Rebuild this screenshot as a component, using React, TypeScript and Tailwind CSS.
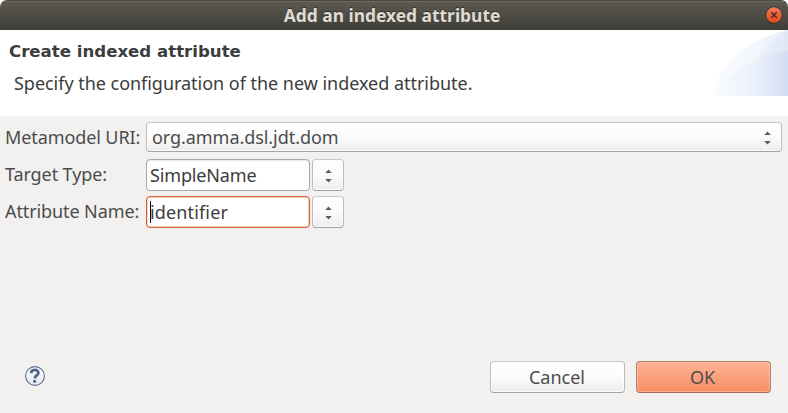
import type { ReactNode } from "react";

function Arrows() {
  return (
    <svg width="7" height="12" viewBox="0 0 7 12" className="shrink-0 overflow-visible">
      <path d="M0.2 3 L3.5 -0.6 L6.8 3 Z M0.2 9 L3.5 12.6 L6.8 9 Z" fill="#5c5c5c" />
    </svg>
  );
}

function Help() {
  return (
    <svg width="20" height="20" viewBox="0 0 20 20" aria-label="Help">
      <defs>
        <linearGradient id="help" x1="0" y1="0" x2="0" y2="1">
          <stop offset="0" stopColor="#ffffff" />
          <stop offset="1" stopColor="#e6e8ec" />
        </linearGradient>
      </defs>
      <circle cx="10" cy="10" r="9.4" fill="url(#help)" stroke="#5b7190" strokeWidth="1.1" />
      <path d="M6.1 7.3 C6.1 3 13.4 2.8 13.4 6.8 C13.4 9.4 10 9.4 9.8 12.3" fill="none" stroke="#4c6487" strokeWidth="2.7" />
      <circle cx="9.6" cy="15.3" r="1.6" fill="#4c6487" />
    </svg>
  );
}

function Banner() {
  return (
    <svg width="75" height="66" viewBox="0 0 75 66" className="shrink-0">
      <defs>
        <linearGradient id="wave" gradientUnits="userSpaceOnUse" x1="0" x2="75" y1="0" y2="0">
          <stop offset="0" stopColor="#f9fbfe" />
          <stop offset="0.5" stopColor="#f4f7fd" />
          <stop offset="1" stopColor="#e8eefa" />
        </linearGradient>
        <linearGradient id="fold" gradientUnits="userSpaceOnUse" x1="40" x2="75" y1="0" y2="0">
          <stop offset="0" stopColor="#eff3fb" />
          <stop offset="1" stopColor="#dfe7f7" />
        </linearGradient>
        <linearGradient id="front" gradientUnits="userSpaceOnUse" x1="0" x2="75" y1="0" y2="0">
          <stop offset="0" stopColor="#fafbfe" />
          <stop offset="0.45" stopColor="#eef3fc" />
          <stop offset="0.8" stopColor="#dfe7f7" />
          <stop offset="1" stopColor="#d0dcf3" />
        </linearGradient>
      </defs>
      <path d="M0 66 C3 38 37 7 75 0 V66 Z" fill="url(#wave)" />
      <path d="M42 36 C50 18 61 7 75 1 V36 Z" fill="url(#fold)" />
      <path d="M0 66 C2 60 6 56 12 51 C29 38 50 24 75 21 V66 Z" fill="url(#front)" />
    </svg>
  );
}

const raised =
  "rounded-[4px] border border-[#bcbbb8] border-t-[#c8c7c4] border-b-[#a3a29f] bg-linear-to-b from-white via-[#fbfbfb] to-[#eeedec] shadow-[inset_0_0_0_1px_rgba(255,255,255,0.7)]";

function Field({ label, children }: { label: string; children: ReactNode }) {
  return (
    <div className="flex h-8">
      <label className="w-[141px] shrink-0 leading-[30px] tracking-[-0.1px]">{label}</label>
      {children}
    </div>
  );
}

function Picker() {
  return (
    <button className={`ml-0.5 flex h-8 w-8 items-center justify-center pt-0.5 pl-px ${raised}`}>
      <Arrows />
    </button>
  );
}

export default function App() {
  return (
    <div className="h-[413px] w-[788px] bg-white">
      <div className="flex h-full flex-col overflow-hidden rounded-t-[7px] bg-[#f2f1f0] font-['Noto_Sans',sans-serif] text-[18px] whitespace-nowrap text-[#4c4c4c]">
        <header className="flex h-[30px] shrink-0 items-center border-t border-[#4a4843] bg-linear-to-b from-[#5d5a51] to-[#3e3d38] pr-[5px] pb-px shadow-[inset_0_1px_0_#6b685f]">
          <h1 className="ml-[19px] flex-1 text-center text-[17.4px] leading-[27px] font-bold text-[#dfdbd2] [text-shadow:0_-1px_0_#33322e]">
            Add an indexed attribute
          </h1>
          <button aria-label="Close" className="flex size-[18px] items-center justify-center">
            <svg width="18" height="18" viewBox="0 0 18 18">
              <defs>
                <linearGradient id="close" x1="0" y1="0" x2="0" y2="1">
                  <stop offset="0" stopColor="#f28262" />
                  <stop offset="0.5" stopColor="#ea6038" />
                  <stop offset="1" stopColor="#df4b16" />
                </linearGradient>
              </defs>
              <circle cx="9" cy="9" r="8.3" fill="url(#close)" stroke="#35342f" strokeWidth="1" />
              <path d="M6.3 6.3 L11.7 11.7 M11.7 6.3 L6.3 11.7" stroke="#4a2a1c" strokeWidth="1.5" />
            </svg>
          </button>
        </header>
        <section className="flex h-[86px] shrink-0 justify-between bg-white text-[#3c3c3c]">
          <div className="pt-[11px] pl-[9px]">
            <h2 className="font-['DejaVu_Sans',sans-serif] text-[16.6px] leading-[22px] font-bold">
              Create indexed attribute
            </h2>
            <p className="mt-[7px] ml-[5px] leading-[26px] tracking-[-0.03px]">
              Specify the configuration of the new indexed attribute.
            </p>
          </div>
          <Banner />
        </section>
        <main className="flex flex-1 flex-col gap-[5px] pt-1.5 pl-[5px]">
          <Field label="Metamodel URI:">
            <div className={`mr-1.5 flex h-[30px] flex-1 items-center justify-between pr-2.5 pl-[5px] ${raised}`}>
              <span className="leading-[28px] tracking-[-0.06px]">org.amma.dsl.jdt.dom</span>
              <span className="pt-0.5">
                <Arrows />
              </span>
            </div>
          </Field>
          <Field label="Target Type:">
            <div className="h-8 w-[164px] rounded-[4px] border border-[#aaa9a6] bg-white pl-[3px] leading-[30px] tracking-[-0.15px] text-[#3c3c3c] shadow-[inset_0_1px_1px_#e8e8e8]">
              SimpleName
            </div>
            <Picker />
          </Field>
          <Field label="Attribute Name:">
            <div className="flex h-8 w-[164px] items-center rounded-[4px] border border-[#d85a30] bg-white pl-[3px] leading-[30px] tracking-[0.15px] text-[#3c3c3c] shadow-[inset_0_0_0_0.5px_#e9a68e]">
              <span className="-mr-px h-[22px] w-px bg-black" />
              identifier
            </div>
            <Picker />
          </Field>
        </main>
        <footer className="flex h-[52px] shrink-0 items-start pr-[17px] pl-[25px]">
          <div className="pt-[5px]">
            <Help />
          </div>
          <div className="ml-auto flex gap-[11px]">
            <button className={`h-8 w-[135px] pr-px leading-[30px] ${raised}`}>Cancel</button>
            <button className="h-8 w-[135px] rounded-[4px] border border-[#b5806b] border-b-[#a26850] bg-linear-to-b from-[#ffb396] to-[#f58d63] pr-0.5 leading-[30px] shadow-[inset_0_0_0_1px_rgba(255,200,178,0.55)]">
              OK
            </button>
          </div>
        </footer>
      </div>
    </div>
  );
}
